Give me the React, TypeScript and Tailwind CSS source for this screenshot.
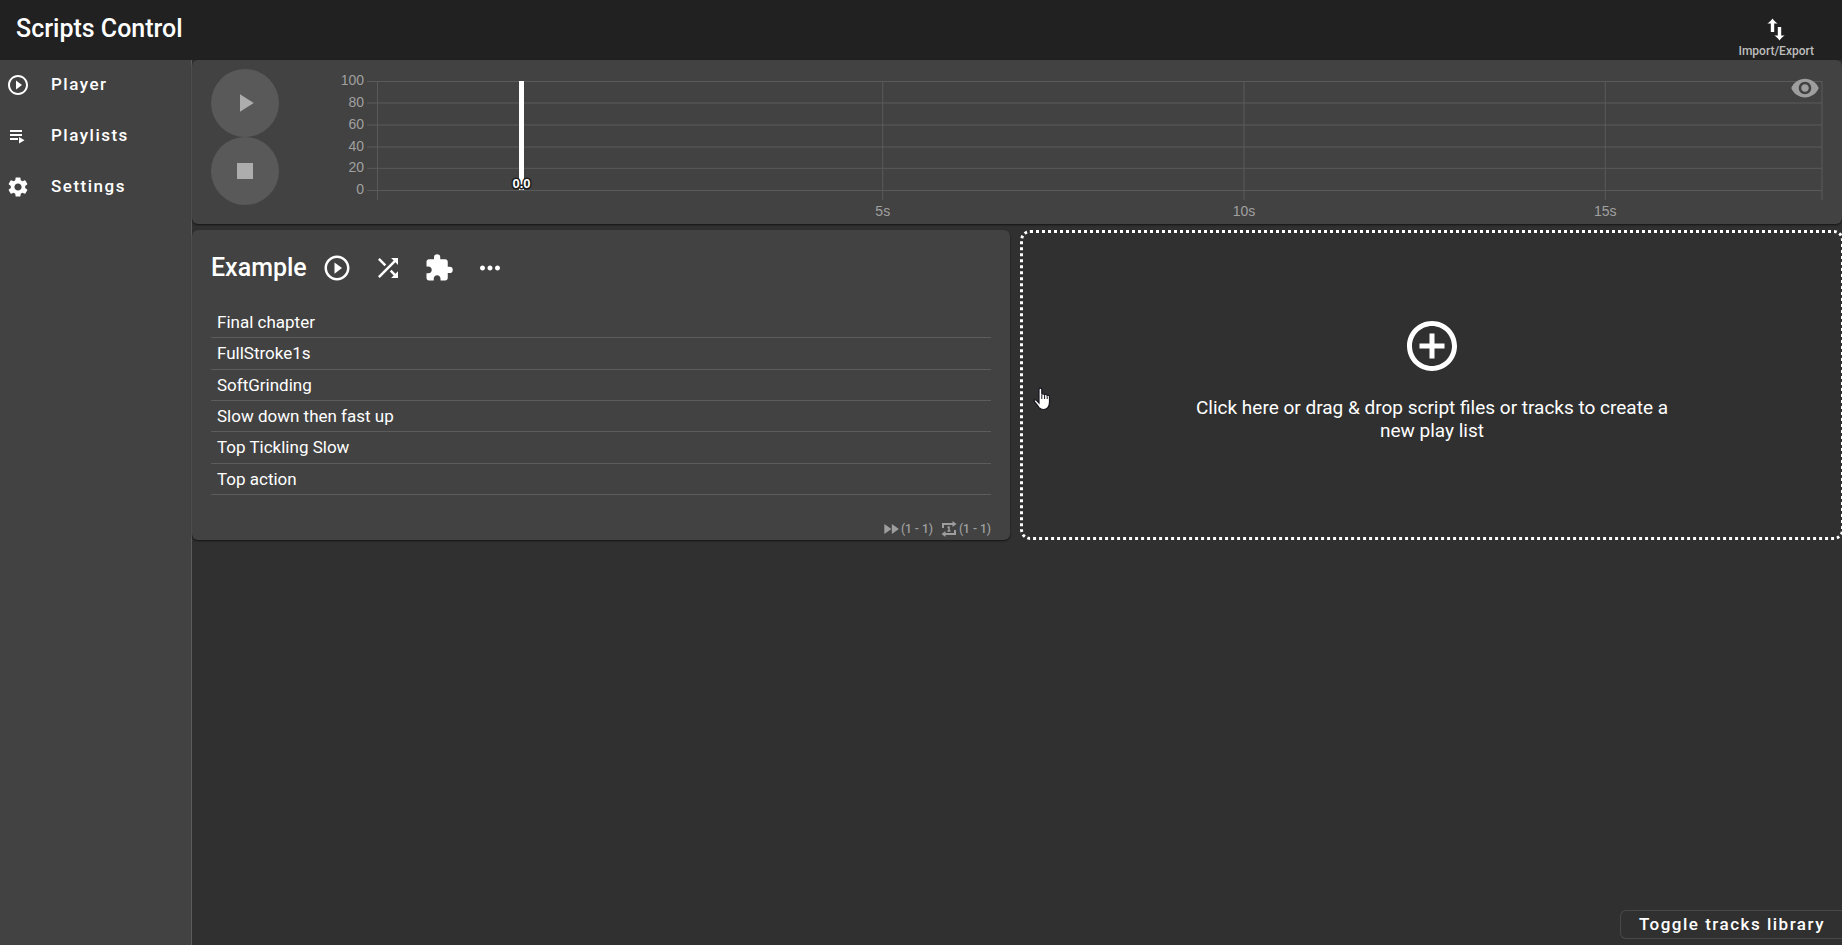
import { type ReactNode } from "react";
import {
  MdPlayCircleOutline,
  MdSettings,
  MdPlayArrow,
  MdStop,
  MdVisibility,
  MdShuffle,
  MdExtension,
  MdMoreHoriz,
  MdFastForward,
  MdAddCircleOutline,
} from "react-icons/md";

const scripts = [
  "Final chapter",
  "FullStroke1s",
  "SoftGrinding",
  "Slow down then fast up",
  "Top Tickling Slow",
  "Top action",
];

const levels = [
  { label: "100", y: 10.5 },
  { label: "80", y: 32 },
  { label: "60", y: 54 },
  { label: "40", y: 76 },
  { label: "20", y: 97.3 },
  { label: "0", y: 119.5 },
];

const times = [
  { label: "5s", x: "35%" },
  { label: "10s", x: "60%" },
  { label: "15s", x: "85%" },
];

function NavItem({ icon, label }: { icon: ReactNode; label: string }) {
  return (
    <a href="#" className="flex h-[51px] items-center gap-[21px] pb-0.5 pl-1.5 text-[17px] font-medium tracking-[1.5px]">
      <span className="flex size-6 items-center justify-center text-[24px]">{icon}</span>
      {label}
    </a>
  );
}

function RoundButton({ label, children }: { label: string; children: ReactNode }) {
  return (
    <button
      type="button"
      aria-label={label}
      className="flex size-[68px] items-center justify-center rounded-full bg-[#595959] text-[#adadad]"
    >
      {children}
    </button>
  );
}

function PlaylistIcon() {
  return (
    <svg viewBox="0 0 24 24" className="size-6" fill="currentColor">
      <path d="M4 6h12v2H4zM4 10h12v2H4zM4 14h8v2H4zM13 13l5.500 3.300-5.500 3.300z" />
    </svg>
  );
}

function ImportExportIcon() {
  return (
    <svg viewBox="0 0 30 30" className="size-[30px] text-white" fill="currentColor">
      <path d="M11.500 3.500c1.500 2.200 3 3.600 5.200 5.100h-3.500V17H9.800V8.600H6.300C8.500 7.100 10 5.700 11.500 3.500z" />
      <path d="M18.500 25.500c-1.500-2.200-3-3.600-5.200-5.100h3.500V12h3.400v8.400h3.500c-2.200 1.500-3.700 2.900-5.200 5.100z" />
    </svg>
  );
}

function RepeatIcon() {
  return (
    <svg viewBox="0 0 16 16" className="size-4" fill="none" stroke="currentColor" strokeWidth="2">
      <path d="M2 7V3h10M14 9v4H4" />
      <path d="M11.500 0 15.500 3l-4 3zM4.500 10 .5 13l4 3z" fill="currentColor" stroke="none" />
      <path d="M6.500 6.500 8 6v4M6.500 10h3" strokeWidth="1.500" />
    </svg>
  );
}

function Timeline() {
  return (
    <svg className="h-[150px] w-full overflow-visible" role="img" aria-label="Timeline">
      <g stroke="#5a5a5a" strokeWidth="1">
        {levels.map((l) => (
          <line key={l.label} x1="-10" x2="100%" y1={l.y} y2={l.y} />
        ))}
        <line x1="0.500" x2="0.500" y1="10" y2="129" />
        {times.map((t) => (
          <line key={t.label} x1={t.x} x2={t.x} y1="10" y2="129" />
        ))}
        <line x1="100%" x2="100%" y1="10" y2="129" />
      </g>
      <g className="fill-[#a0a0a0] font-['Liberation_Sans',sans-serif] text-[14px]">
        {levels.map((l) => (
          <text key={l.label} x="-13" y={Math.floor(l.y) + 4} textAnchor="end">
            {l.label}
          </text>
        ))}
        {times.map((t) => (
          <text key={t.label} x={t.x} y="145" textAnchor="middle">
            {t.label}
          </text>
        ))}
      </g>
      <line x1="10%" x2="10%" y1="10" y2="119" stroke="#fff" strokeWidth="5" />
      <text
        x="10%"
        y="117"
        textAnchor="middle"
        fill="#fff"
        stroke="#1c1c1c"
        strokeWidth="3"
        strokeLinejoin="round"
        paintOrder="stroke"
        className="font-['Liberation_Sans',sans-serif] text-[13px] font-bold"
      >
        0.0
      </text>
    </svg>
  );
}

export default function App() {
  return (
    <div className="flex min-h-screen flex-col overflow-x-hidden bg-[#303030] font-['Roboto',sans-serif] text-white">
      <header className="flex h-[60px] items-start justify-between bg-[#212121] pr-7 pl-4">
        <h1 className="pt-[13px] text-[25px] leading-8 font-medium">Scripts Control</h1>
        <button
          type="button"
          className="flex flex-col items-center pt-[15px] text-[12px] leading-3 font-medium text-[#bdbdbd]"
        >
          <ImportExportIcon />
          Import/Export
        </button>
      </header>

      <div className="flex grow">
        <nav className="w-48 shrink-0 border-r border-[#5c5c5c] bg-[#424242]">
          <NavItem icon={<MdPlayCircleOutline />} label="Player" />
          <NavItem icon={<PlaylistIcon />} label="Playlists" />
          <NavItem icon={<MdSettings />} label="Settings" />
        </nav>

        <main className="flex min-w-0 grow flex-col">
          <section className="flex h-[164px] rounded-md bg-[#424242] pt-[9px] pr-5 pl-[19px] shadow-[0_1px_2px_rgba(0,0,0,0.6)]">
            <div className="flex w-[68px] shrink-0 flex-col">
              <RoundButton label="Play">
                <MdPlayArrow className="size-[30px]" />
              </RoundButton>
              <RoundButton label="Stop">
                <MdStop className="size-8" />
              </RoundButton>
            </div>
            <div className="relative ml-[98px] min-w-0 grow pt-0.5">
              <Timeline />
              <button type="button" aria-label="Toggle visibility" className="absolute top-1 right-0.5 text-[#9e9e9e]">
                <MdVisibility className="size-[30px]" />
              </button>
            </div>
          </section>

          <div className="mt-1.5 -mr-0.5 grid grid-cols-[818fr_824fr] gap-2.5">
            <section className="flex h-[310px] flex-col rounded-md bg-[#424242] px-[19px] pt-[18px] shadow-[0_1px_2px_rgba(0,0,0,0.6)]">
              <div className="flex h-10 items-center">
                <h2 className="mr-[15px] text-[25px] leading-8 font-medium">Example</h2>
                <div className="flex items-center gap-[21px]">
                  <button type="button" aria-label="Play playlist">
                    <MdPlayCircleOutline className="size-[30px]" />
                  </button>
                  <button type="button" aria-label="Shuffle">
                    <MdShuffle className="size-[30px]" />
                  </button>
                  <button type="button" aria-label="Extensions">
                    <MdExtension className="size-[30px]" />
                  </button>
                  <button type="button" aria-label="More">
                    <MdMoreHoriz className="size-[30px]" />
                  </button>
                </div>
              </div>
              <ul className="mt-[19px] flex h-[188px] flex-col text-[17px] leading-[30px]">
                {scripts.map((s) => (
                  <li key={s} className="flex-1 border-b border-[#5c5c5c] px-1.5">
                    {s}
                  </li>
                ))}
              </ul>
              <div className="mt-auto flex items-center justify-end gap-2 pb-px text-[12px] leading-4 font-medium text-[#9e9e9e]">
                <span className="flex items-center">
                  <MdFastForward className="size-5" />
                  (1 - 1)
                </span>
                <span className="flex items-center gap-0.5">
                  <RepeatIcon />
                  (1 - 1)
                </span>
              </div>
            </section>

            <button
              type="button"
              className="relative flex flex-col items-center rounded-[10px] border-[3px] border-dotted border-white pt-[83px]"
            >
              <MdAddCircleOutline className="size-[60px]" />
              <span className="mt-5 w-[500px] text-[19px] leading-[23px]">
                Click here or drag &amp; drop script files or tracks to create a new play list
              </span>
              <svg viewBox="0 0 18 24" className="absolute top-[154px] left-2.5 h-6 w-[18px]" aria-hidden="true">
                <path
                  d="M6 2.500a1.400 1.400 0 0 1 2.800 0V7.500c.3-1 2.500-.8 2.700.4.500-.8 2.500-.5 2.700.7.600-.7 2.300-.3 2.300 1v5.500c0 5-2.500 7.400-6 7.400-3 0-4.500-1.400-5.500-3.500L1.200 14.500c-.7-1.600 1.300-2.300 2.300-1.100L6 16z"
                  fill="#fff"
                  stroke="#15151f"
                  strokeWidth="1.200"
                />
                <path d="M8.800 8v4M11.600 8.500v3.500M14.200 9.500V12" stroke="#15151f" strokeWidth="1" />
              </svg>
            </button>
          </div>

          <div className="mt-auto flex justify-end pb-1.5">
            <button
              type="button"
              className="rounded-l-md border border-r-0 border-[#484848] pr-[17px] pl-[18px] text-[17px] leading-[27px] font-medium tracking-[1.5px]"
            >
              Toggle tracks library
            </button>
          </div>
        </main>
      </div>
    </div>
  );
}
